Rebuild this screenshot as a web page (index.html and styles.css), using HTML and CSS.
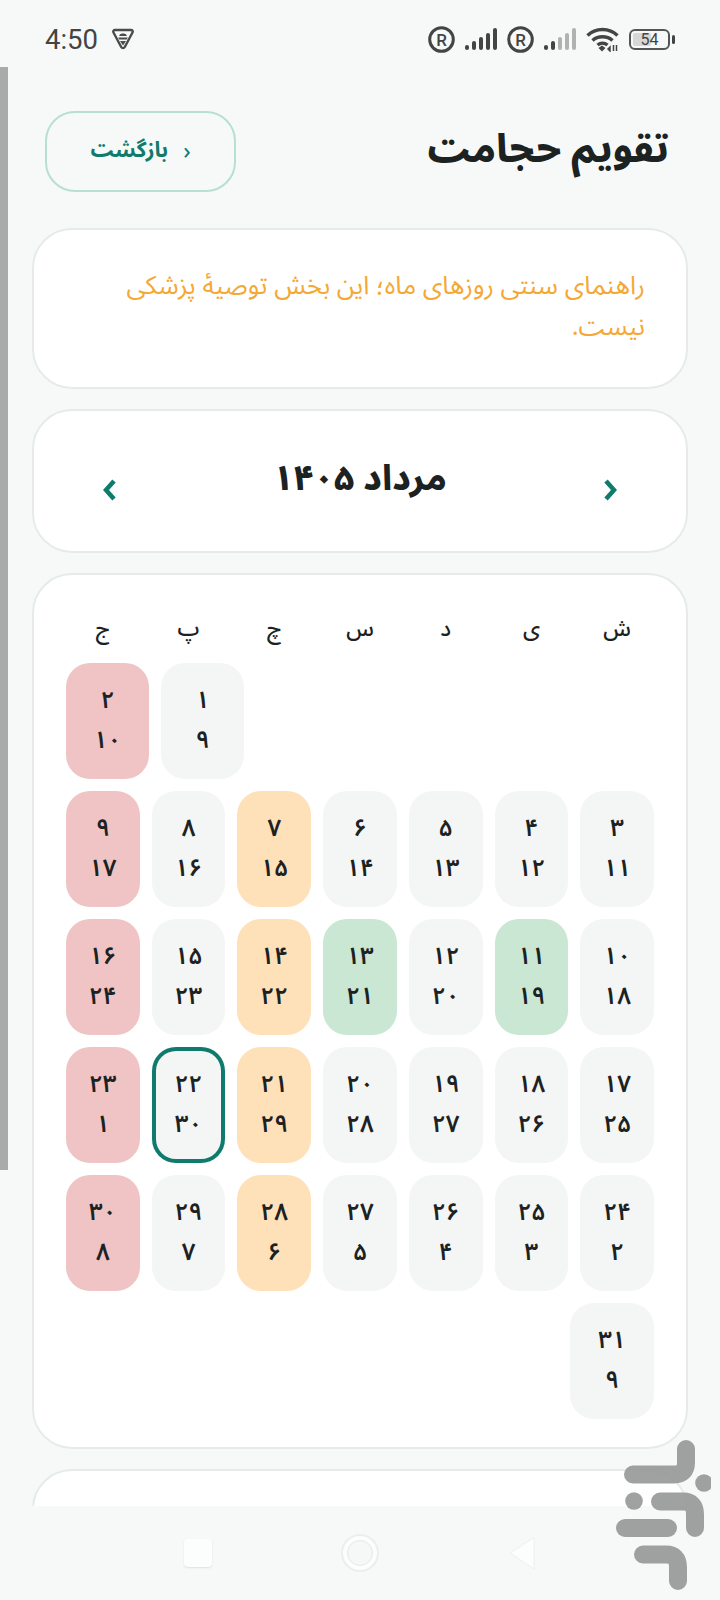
FILE: index.html

```html
<!DOCTYPE html>
<html lang="fa" dir="rtl">
<head>
    <meta charset="UTF-8">
    <meta name="viewport" content="width=device-width, initial-scale=1.0">
    <link rel="stylesheet" href="styles.css">
    <title>تقویم حجامت</title>
</head>
<body>

<div class="status-bar" dir="ltr">
    <div class="status-left">
        <span class="time">4:50</span>
        <svg class="shield" width="22" height="22" viewBox="0 0 22 22">
            <path d="M3 2h16c1.400 0 2.200 1.300 1.500 2.500l-7.700 14.500c-.8 1.400-2.800 1.400-3.600 0L1.500 4.500C.8 3.300 1.600 2 3 2z" fill="none" stroke="#4a4c4c" stroke-width="2.400"/>
            <path d="M7.500 7c.8-2 6.200-2 7 0l.3 1h-7.600zM6.200 9.500h9.600l-1 2H7.200zM8 13h6l-3 4.500z" fill="#4a4c4c"/>
        </svg>
    </div>
    <div class="status-right">
        <svg width="27" height="27" viewBox="0 0 27 27"><circle cx="13.500" cy="13.500" r="11.800" fill="none" stroke="#444" stroke-width="3"/><text x="13.500" y="19.500" text-anchor="middle" class="reg-mark">R</text></svg>
        <svg width="32" height="22" viewBox="0 0 32 22" fill="#444"><rect x="0" y="17" width="4" height="5" rx="2"/><rect x="7" y="13" width="4" height="9" rx="2"/><rect x="14" y="9" width="4" height="13" rx="2"/><rect x="21" y="5" width="4" height="17" rx="2"/><rect x="28" y="0" width="4" height="22" rx="2"/></svg>
        <svg width="27" height="27" viewBox="0 0 27 27"><circle cx="13.500" cy="13.500" r="11.800" fill="none" stroke="#444" stroke-width="3"/><text x="13.500" y="19.500" text-anchor="middle" class="reg-mark">R</text></svg>
        <svg width="32" height="22" viewBox="0 0 32 22" fill="#b0b2b2"><rect x="0" y="17" width="4" height="5" rx="2" fill="#444"/><rect x="7" y="13" width="4" height="9" rx="2" fill="#444"/><rect x="14" y="9" width="4" height="13" rx="2"/><rect x="21" y="5" width="4" height="17" rx="2"/><rect x="28" y="0" width="4" height="22" rx="2"/></svg>
        <svg width="33" height="25" viewBox="0 0 33 25">
            <path d="M1.500 8.500C9.500 .5 23.500 .5 31.500 8.500M6.500 13.500c5.500-5 14.500-5 20 0M11.500 18c3-2.500 7-2.500 10 0" fill="none" stroke="#444" stroke-width="3.400"/>
            <path d="M12.500 21l3.500-2.500 3.500 2.500-3.500 3.500z" fill="#444"/>
            <path d="M24 24v-4l-2 2zM27.500 24v-6M30.500 24v-6" fill="#444" stroke="#444" stroke-width="1.500"/>
        </svg>
        <div class="battery">
            <div class="battery-level"></div>
            <span class="battery-text">54</span>
        </div>
    </div>
</div>

<main class="page">
    <header class="page-head">
        <h1 class="page-title">تقویم حجامت</h1>
        <a class="back-btn"><span class="back-arrow">‹</span><span class="back-label">بازگشت</span></a>
    </header>

    <section class="card note">
        <p>راهنمای سنتی روزهای ماه؛ این بخش توصیهٔ پزشکی نیست.</p>
    </section>

    <section class="card month-nav">
        <svg class="chev" width="14" height="22" viewBox="0 0 14 22"><path d="M3 2l8 9-8 9" fill="none" stroke="#0f7b6c" stroke-width="4.500"/></svg>
        <h2 class="month-title">مرداد ۱۴۰۵</h2>
        <svg class="chev" width="14" height="22" viewBox="0 0 14 22"><path d="M11 2l-8 9 8 9" fill="none" stroke="#0f7b6c" stroke-width="4.500"/></svg>
    </section>

    <section class="card calendar">
        <div class="weekdays">
            <span>ش</span><span>ی</span><span>د</span><span>س</span><span>چ</span><span>پ</span><span>ج</span>
        </div>
        <div class="week week-first">
            <div class="blank"></div><div class="blank"></div><div class="blank"></div><div class="blank"></div><div class="blank"></div>
            <div class="day"><b>۱</b><b>۹</b></div>
            <div class="day red"><b>۲</b><b>۱۰</b></div>
        </div>
        <div class="week">
            <div class="day"><b>۳</b><b>۱۱</b></div>
            <div class="day"><b>۴</b><b>۱۲</b></div>
            <div class="day"><b>۵</b><b>۱۳</b></div>
            <div class="day"><b>۶</b><b>۱۴</b></div>
            <div class="day orange"><b>۷</b><b>۱۵</b></div>
            <div class="day"><b>۸</b><b>۱۶</b></div>
            <div class="day red"><b>۹</b><b>۱۷</b></div>
        </div>
        <div class="week">
            <div class="day"><b>۱۰</b><b>۱۸</b></div>
            <div class="day green"><b>۱۱</b><b>۱۹</b></div>
            <div class="day"><b>۱۲</b><b>۲۰</b></div>
            <div class="day green"><b>۱۳</b><b>۲۱</b></div>
            <div class="day orange"><b>۱۴</b><b>۲۲</b></div>
            <div class="day"><b>۱۵</b><b>۲۳</b></div>
            <div class="day red"><b>۱۶</b><b>۲۴</b></div>
        </div>
        <div class="week">
            <div class="day"><b>۱۷</b><b>۲۵</b></div>
            <div class="day"><b>۱۸</b><b>۲۶</b></div>
            <div class="day"><b>۱۹</b><b>۲۷</b></div>
            <div class="day"><b>۲۰</b><b>۲۸</b></div>
            <div class="day orange"><b>۲۱</b><b>۲۹</b></div>
            <div class="day today"><b>۲۲</b><b>۳۰</b></div>
            <div class="day red"><b>۲۳</b><b>۱</b></div>
        </div>
        <div class="week">
            <div class="day"><b>۲۴</b><b>۲</b></div>
            <div class="day"><b>۲۵</b><b>۳</b></div>
            <div class="day"><b>۲۶</b><b>۴</b></div>
            <div class="day"><b>۲۷</b><b>۵</b></div>
            <div class="day orange"><b>۲۸</b><b>۶</b></div>
            <div class="day"><b>۲۹</b><b>۷</b></div>
            <div class="day red"><b>۳۰</b><b>۸</b></div>
        </div>
        <div class="week week-last">
            <div class="day"><b>۳۱</b><b>۹</b></div>
            <div class="blank"></div><div class="blank"></div><div class="blank"></div><div class="blank"></div><div class="blank"></div><div class="blank"></div>
        </div>
    </section>

    <section class="card next-card"></section>
</main>

<nav class="nav-bar" dir="ltr">
    <div class="nav-square"></div>
    <div class="nav-circle"><div class="nav-circle-inner"></div></div>
    <svg class="nav-back" width="28" height="35" viewBox="0 0 28 35"><path d="M26 1.500V33L2 17z" fill="#fcfdfd" stroke="#eef0ef" stroke-width="1" stroke-linejoin="round"/></svg>
</nav>

<div class="scrollbar"></div>

<svg class="watermark" width="96" height="160" viewBox="0 0 96 160">
    <g fill="none" stroke="#9b9d9c" stroke-width="18" stroke-linecap="round">
        <path d="M18 35.500H59Q71 35.500 71 23.500V10"/>
        <path d="M45 62.500H68Q80 62.500 80 75V89"/>
        <path d="M10 89H53"/>
        <path d="M28 115.500H51Q63 115.500 63 128V142"/>
    </g>
    <circle cx="89" cy="44" r="8.800" fill="#9b9d9c"/>
    <circle cx="19" cy="62" r="8.800" fill="#9b9d9c"/>
</svg>

</body>
</html>
```

FILE: styles.css

```css
* {
    box-sizing: border-box;
}

html, body {
    margin: 0;
    height: 1600px;
    overflow: hidden;
}

body {
    position: relative;
    display: flex;
    flex-direction: column;
    background: #f7f9f8;
    color: #1c2222;
    font-family: 'Noto Sans Arabic', 'Vazirmatn', 'DejaVu Sans', sans-serif;
}

/* status bar */
.status-bar {
    height: 67px;
    flex: none;
    display: flex;
    justify-content: space-between;
    align-items: center;
    padding: 11px 45px 0 45px;
}

.status-left, .status-right {
    display: flex;
    align-items: center;
}

.status-left {
    gap: 14px;
}

.status-right {
    gap: 10px;
}

.time {
    font-family: Roboto, sans-serif;
    font-size: 27.500px;
    color: #444;
}

.reg-mark {
    font-family: Roboto, sans-serif;
    font-size: 17px;
    font-weight: 500;
    fill: #444;
}

.battery {
    position: relative;
    width: 41px;
    height: 21px;
    border: 2px solid #555;
    border-radius: 6px;
    padding: 2px;
    margin-right: 5px;
}

.battery::after {
    content: "";
    position: absolute;
    top: 4px;
    right: -7px;
    width: 3px;
    height: 9px;
    border-radius: 2px;
    background: #444;
}

.battery-level {
    width: 54%;
    height: 100%;
    background: #d6d8d8;
    border-radius: 2px;
}

.battery-text {
    position: absolute;
    inset: 0;
    text-align: center;
    font-family: Roboto, sans-serif;
    font-size: 16px;
    line-height: 17px;
    color: #444;
}

/* page */
.page {
    flex: 1;
    min-height: 0;
    overflow: hidden;
    padding: 44px 32px 0;
}

.page-head {
    height: 81px;
    display: flex;
    justify-content: space-between;
    align-items: center;
    padding: 0 19px 0 13px;
    margin-bottom: 36px;
}

.page-title {
    margin: 0;
    padding-bottom: 4px;
    font-size: 39px;
    line-height: 50px;
    font-weight: 800;
}

.back-btn {
    width: 191px;
    height: 81px;
    display: flex;
    justify-content: center;
    align-items: center;
    gap: 15px;
    border: 2px solid #b6dfd6;
    border-radius: 30px;
    color: #0f7b6c;
    font-size: 21.500px;
    font-weight: 700;
}

.back-label {
    padding-bottom: 3px;
}

.back-arrow {
    font-size: 24px;
    font-weight: 400;
}

.card {
    background: #fff;
    border: 2px solid #e6ebea;
    border-radius: 40px;
    margin-bottom: 20px;
}

.note {
    height: 161px;
    padding: 36px 41px 0;
}

.note p {
    margin: 0;
    color: #f5a833;
    font-size: 25.700px;
    line-height: 41px;
}

.month-nav {
    height: 144px;
    display: flex;
    justify-content: space-between;
    align-items: center;
    padding: 0 69px;
}

.month-title {
    margin: 0 0 4px;
    font-size: 35px;
    font-weight: 800;
}

.chev {
    margin-top: 18px;
}

.calendar {
    height: 876px;
    padding: 32px 32px 0;
}

.weekdays {
    display: grid;
    grid-template-columns: repeat(7, 1fr);
    gap: 12px;
    height: 56px;
    text-align: center;
    font-size: 22px;
    font-weight: 500;
    line-height: 44px;
}

.week {
    display: flex;
    gap: 12px;
    margin-bottom: 12px;
}

.day {
    flex: 1;
    height: 116px;
    padding-bottom: 1px;
    display: flex;
    flex-direction: column;
    justify-content: center;
    align-items: center;
    background: #f4f6f5;
    border-radius: 24px;
    font-size: 24px;
}

.day b {
    display: block;
    font-weight: 600;
    line-height: 40px;
    letter-spacing: -1px;
}

.blank {
    flex: none;
}

.week-first .blank {
    width: 70px;
}

.week-last .blank {
    width: 72px;
}

.red {
    background: #f0c4c5;
}

.orange {
    background: #fee1b9;
}

.green {
    background: #c9e7d3;
}

.today {
    box-shadow: inset 0 0 0 4px #0f7b6c;
}

.next-card {
    height: 200px;
}

/* android nav */
.nav-bar {
    height: 94px;
    flex: none;
    background: #f7f9f8;
    display: flex;
    justify-content: center;
    align-items: center;
    gap: 129px;
}

.nav-square {
    width: 28px;
    height: 28px;
    background: #fcfdfd;
    border-radius: 4px;
    box-shadow: 0 1px 2px rgba(0, 0, 0, 0.1);
}

.nav-circle {
    width: 38px;
    height: 38px;
    display: flex;
    justify-content: center;
    align-items: center;
    border: 2px solid #eceeed;
    border-radius: 50%;
    background: #fcfdfd;
}

.nav-circle-inner {
    width: 26px;
    height: 26px;
    border-radius: 50%;
    background: #f6f8f7;
    border: 1px solid #e6e8e7;
}

/* overlays */
.scrollbar {
    position: absolute;
    top: 67px;
    left: 0;
    width: 8px;
    height: 1103px;
    background: #a9abaa;
}

.watermark {
    position: absolute;
    left: 615px;
    top: 1439px;
    opacity: 0.95;
}
```
